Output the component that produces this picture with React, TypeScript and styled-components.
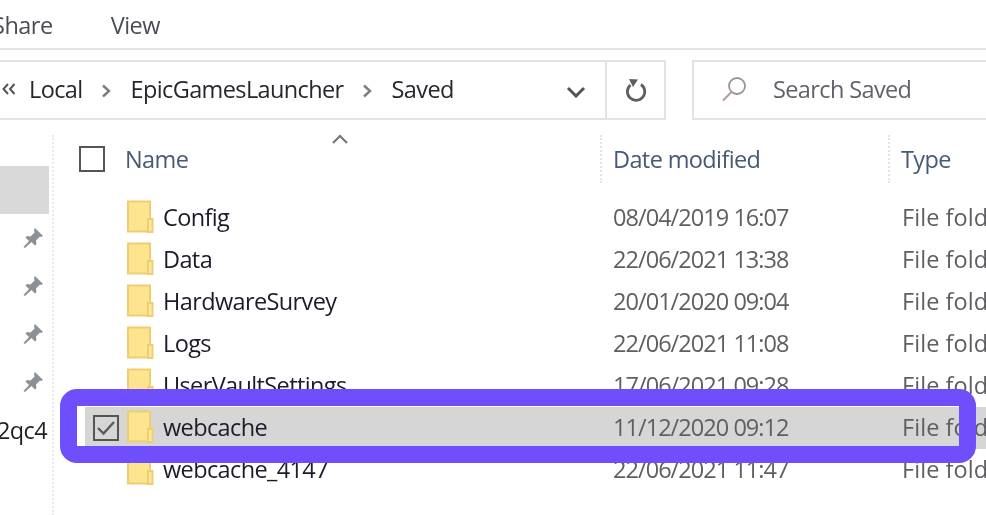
import React from "react";
import styled, { createGlobalStyle } from "styled-components";

const Global = createGlobalStyle`
  html, body { margin: 0; padding: 0; background: #fff; }
  body { font-family: "Open Sans", "Noto Sans", "Liberation Sans", sans-serif; }
`;

const Page = styled.div`
  position: relative;
  width: 986px;
  height: 515px;
  overflow: hidden;
  background: #fff;
`;
const Explorer = styled.div`
  width: 986px;
  height: 515px;
  filter: blur(0.6px);
  font-size: 23.5px;
  letter-spacing: -0.62px;
`;
const Ribbon = styled.div`
  display: flex;
  align-items: center;
  height: 50px;
  padding-top: 2px;
  box-sizing: border-box;
  border-bottom: 2px solid #e5e5e5;
`;
const RibbonTab = styled.span<{ $clip?: boolean }>`
  color: #4a4d55;
  margin-left: ${(p) => (p.$clip ? "-8px" : "58px")};
  letter-spacing: -0.5px;
`;
const AddressRow = styled.div`
  display: flex;
  height: 60px;
  margin-top: 10px;
  gap: 26px;
`;
const AddressBox = styled.div`
  display: flex;
  width: 668px;
  margin-left: -2px;
  border: 2px solid #e3e3e3;
  box-sizing: border-box;
`;
const Crumbs = styled.div`
  flex: 1;
  display: flex;
  align-items: center;
  padding-left: 2px;
  color: #25272c;
  padding-bottom: 3px;
`;
const Crumb = styled.span<{ $first?: boolean }>`
  margin-left: ${(p) => (p.$first ? "13px" : "0")};
`;
const Sep = styled.svg`
  width: 10px;
  height: 14px;
  margin: 4px 20px 0 18px;
  flex: none;
`;
const Dropdown = styled.div`
  width: 58px;
  display: flex;
  align-items: center;
  justify-content: center;
  margin-left: auto;
  padding-top: 7px;
  box-sizing: border-box;
`;
const RefreshButton = styled.div`
  width: 59px;
  display: flex;
  align-items: center;
  justify-content: center;
  border-left: 2px solid #e3e3e3;
  box-sizing: border-box;
`;
const SearchBox = styled.div`
  flex: 1;
  display: flex;
  align-items: center;
  margin-right: -10px;
  padding-left: 27px;
  gap: 26px;
  border: 2px solid #e3e3e3;
  box-sizing: border-box;
  color: #62626a;
  padding-bottom: 3px;
`;
const Body = styled.div`
  display: flex;
  padding-top: 15px;
`;
const Sidebar = styled.div`
  width: 54px;
  height: 380px;
  flex: none;
  padding-top: 31px;
  box-sizing: border-box;
  border-right: 2px dotted #e9e9e9;
`;
const SideItem = styled.div<{ $selected?: boolean }>`
  height: 48px;
  width: 49px;
  display: flex;
  align-items: center;
  justify-content: flex-end;
  padding-right: 5px;
  box-sizing: border-box;
  background: ${(p) => (p.$selected ? "#d9d9d9" : "transparent")};
  color: #1f1f24;
  white-space: nowrap;
`;
const SideLabel = styled.span`
  margin-right: -3px;
`;
const List = styled.div`
  flex: 1;
  min-width: 0;
`;
const Header = styled.div`
  position: relative;
  display: grid;
  grid-template-columns: 546px 288px 1fr;
  height: 48px;
  color: #465a75;
`;
const HeaderCell = styled.div<{ $first?: boolean }>`
  display: flex;
  align-items: center;
  padding-left: ${(p) => (p.$first ? "25px" : "11px")};
  border-left: ${(p) => (p.$first ? "none" : "2px dotted #e3e3e3")};
  gap: 20px;
`;
const Box = styled.div`
  width: 26px;
  height: 26px;
  border: 2.5px solid #555;
  box-sizing: border-box;
  flex: none;
  display: flex;
  align-items: center;
  justify-content: center;
`;
const SortArrow = styled.svg`
  position: absolute;
  left: 277px;
  top: -2px;
  width: 18px;
  height: 12px;
`;
const Rows = styled.div`
  margin-top: 14px;
  margin-left: 31px;
`;
const Row = styled.div<{ $selected?: boolean }>`
  display: grid;
  grid-template-columns: 515px 288px 1fr;
  height: 42px;
  align-items: center;
  background: ${(p) => (p.$selected ? "#d6d6d6" : "transparent")};
`;
const NameCell = styled.div`
  display: flex;
  align-items: center;
  padding-left: 8px;
  color: #1d1b2b;
  white-space: nowrap;
`;
const CheckSlot = styled.div`
  width: 34px;
  flex: none;
`;
const FolderIcon = styled.svg`
  width: 27px;
  height: 33px;
  flex: none;
  margin-right: 9px;
  margin-top: -4px;
`;
const DateCell = styled.div`
  padding-left: 13px;
  color: #5f5f63;
  white-space: nowrap;
  padding-bottom: 2px;
  letter-spacing: -0.95px;
`;
const TypeCell = styled.div`
  padding-left: 14px;
  color: #5f5f63;
  white-space: nowrap;
  padding-bottom: 2px;
  letter-spacing: 0.05px;
`;
const RowName = styled.span`
  margin-bottom: 2px;
`;
const Highlight = styled.div`
  position: absolute;
  left: 60px;
  top: 389px;
  width: 916px;
  height: 74px;
  border: 17px solid #6f4ffb;
  border-radius: 17px;
  box-sizing: border-box;
`;

const Folder = () => (
  <FolderIcon viewBox="0 0 27 33">
    <path d="M1 1.500h22v30H1z" fill="#fde48f" stroke="#f0cd6e" strokeWidth="2" />
    <path d="M21 19h4.500v13H21z" fill="#fde9a4" stroke="#f0cd6e" strokeWidth="2" />
  </FolderIcon>
);

const Pin = () => (
  <svg width="22" height="22" viewBox="0 0 22 22">
    <path d="M13 1l8 8-2 1-1-.5-4 4 .5 3.500-1.500 1.500-3.500-3.500L3 21l-1.500-1L7 14 3.500 10.500 5 9l3.500.5 4-4L12 3z" fill="#8b9099" />
  </svg>
);

const Chevron = () => (
  <Sep viewBox="0 0 10 14">
    <path d="M2 1.500L8 7l-6 5.500" fill="none" stroke="#7c7c7c" strokeWidth="2.400" />
  </Sep>
);

const rows = [
  { name: "Config", date: "08/04/2019 16:07" },
  { name: "Data", date: "22/06/2021 13:38" },
  { name: "HardwareSurvey", date: "20/01/2020 09:04" },
  { name: "Logs", date: "22/06/2021 11:08" },
  { name: "UserVaultSettings", date: "17/06/2021 09:28" },
  { name: "webcache", date: "11/12/2020 09:12", selected: true },
  { name: "webcache_4147", date: "22/06/2021 11:47" },
];

export default function App() {
  return (
    <Page>
      <Global />
      <Explorer>
        <Ribbon>
          <RibbonTab $clip>Share</RibbonTab>
          <RibbonTab>View</RibbonTab>
        </Ribbon>
        <AddressRow>
          <AddressBox>
            <Crumbs>
              <svg width="14" height="12" viewBox="0 0 14 12">
                <path d="M6 1L1.500 6 6 11M12.500 1L8 6l4.500 5" fill="none" stroke="#555" strokeWidth="2" />
              </svg>
              <Crumb $first>Local</Crumb>
              <Chevron />
              <Crumb>EpicGamesLauncher</Crumb>
              <Chevron />
              <Crumb>Saved</Crumb>
              <Dropdown>
                <svg width="20" height="12" viewBox="0 0 20 12">
                  <path d="M2 2l8 8 8-8" fill="none" stroke="#555" strokeWidth="3" />
                </svg>
              </Dropdown>
            </Crumbs>
            <RefreshButton>
              <svg width="22" height="25" viewBox="0 0 22 25">
                <path d="M5.500 7a8.700 8.700 0 1 0 10.500-.5" fill="none" stroke="#5f5f5f" strokeWidth="2.800" />
                <path d="M4 1l9 .5L8 9z" fill="#5f5f5f" />
              </svg>
            </RefreshButton>
          </AddressBox>
          <SearchBox>
            <svg width="26" height="26" viewBox="0 0 26 26">
              <circle cx="16" cy="10" r="8" fill="none" stroke="#9c9494" strokeWidth="1.800" />
              <path d="M10.500 16L2 24.500" stroke="#b39a90" strokeWidth="2" />
            </svg>
            <span>Search Saved</span>
          </SearchBox>
        </AddressRow>
        <Body>
          <Sidebar>
            <SideItem $selected />
            <SideItem><Pin /></SideItem>
            <SideItem><Pin /></SideItem>
            <SideItem><Pin /></SideItem>
            <SideItem><Pin /></SideItem>
            <SideItem><SideLabel>2qc4</SideLabel></SideItem>
          </Sidebar>
          <List>
            <Header>
              <HeaderCell $first>
                <Box />
                <span>Name</span>
              </HeaderCell>
              <HeaderCell>Date modified</HeaderCell>
              <HeaderCell>Type</HeaderCell>
              <SortArrow viewBox="0 0 18 12">
                <path d="M2 10l7-7 7 7" fill="none" stroke="#777" strokeWidth="2.200" />
              </SortArrow>
            </Header>
            <Rows>
              {rows.map((r) => (
                <Row key={r.name} $selected={r.selected}>
                  <NameCell>
                    <CheckSlot>
                      {r.selected && (
                        <Box>
                          <svg width="18" height="16" viewBox="0 0 18 16">
                            <path d="M1 8l5.500 5.500L17 2" fill="none" stroke="#5a5a5a" strokeWidth="2.400" />
                          </svg>
                        </Box>
                      )}
                    </CheckSlot>
                    <Folder />
                    <RowName>{r.name}</RowName>
                  </NameCell>
                  <DateCell>{r.date}</DateCell>
                  <TypeCell>File folder</TypeCell>
                </Row>
              ))}
            </Rows>
          </List>
        </Body>
      </Explorer>
      <Highlight />
    </Page>
  );
}
